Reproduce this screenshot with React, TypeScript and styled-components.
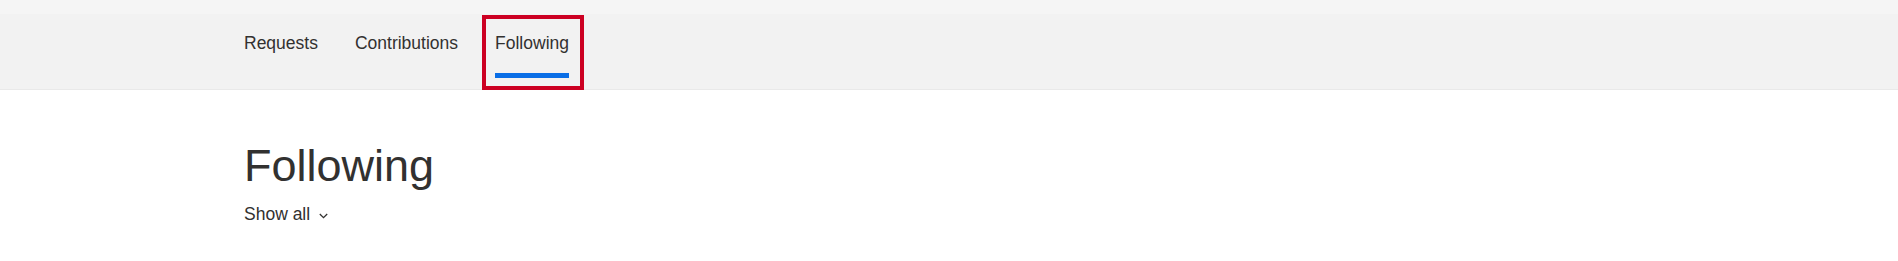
import React, { FC } from 'react';
import styled, { createGlobalStyle } from 'styled-components';

const GlobalStyle = createGlobalStyle`
  html, body {
    margin: 0;
    padding: 0;
    background: #ffffff;
  }
  body {
    font-family: 'Liberation Sans', Arial, sans-serif;
    color: #323130;
  }
`;

const TopStrip = styled.div`
  height: 14px;
  background-color: #f5f5f5;
`;

const NavBar = styled.nav`
  height: 75px;
  background-color: #f2f2f2;
  border-bottom: 1px solid #e9e9e9;
`;

const Container = styled.div`
  width: 1410px;
  margin: 0 auto;
`;

const Tabs = styled.ul`
  display: flex;
  gap: 37px;
  margin: 0;
  padding: 0;
  list-style: none;
  height: 75px;
`;

const Tab = styled.li<{ $active?: boolean }>`
  position: relative;
  display: flex;
  flex-direction: column;
  padding-top: 17px;
  font-size: 17.5px;
  line-height: 24px;
  color: #323130;
  cursor: pointer;

  &::after {
    content: '';
    display: block;
    margin-top: 18px;
    height: 5px;
    background-color: ${(p) => (p.$active ? '#0a6ee6' : 'transparent')};
  }
`;

const Highlight = styled.span`
  position: absolute;
  top: 1px;
  bottom: -1px;
  left: -13px;
  right: -15px;
  border: 4px solid #cc0022;
  pointer-events: none;
`;

const Heading = styled.h1`
  margin: 49px 0 0;
  font-size: 45px;
  font-weight: 400;
  line-height: 54px;
  color: #323130;
`;

const ShowAll = styled.button`
  display: inline-flex;
  align-items: center;
  gap: 9px;
  margin-top: 9px;
  padding: 0;
  border: none;
  background: none;
  font-family: inherit;
  font-size: 17.5px;
  line-height: 24px;
  color: #323130;
  cursor: pointer;
`;

const Chevron: FC = () => (
  <svg width="9" height="6" viewBox="0 0 9 6" style={{ marginTop: 4 }}>
    <path d="M0.8 1 L4.5 4.6 L8.2 1" fill="none" stroke="#323130" strokeWidth="1.3" />
  </svg>
);

const tabs = ['Requests', 'Contributions', 'Following'];

export default function App() {
  const active = 'Following';
  return (
    <>
      <GlobalStyle />
      <TopStrip />
      <NavBar>
        <Container>
          <Tabs>
            {tabs.map((t) => (
              <Tab key={t} $active={t === active}>
                {t}
                {t === active && <Highlight />}
              </Tab>
            ))}
          </Tabs>
        </Container>
      </NavBar>
      <Container>
        <Heading>Following</Heading>
        <ShowAll>
          Show all
          <Chevron />
        </ShowAll>
      </Container>
    </>
  );
}
